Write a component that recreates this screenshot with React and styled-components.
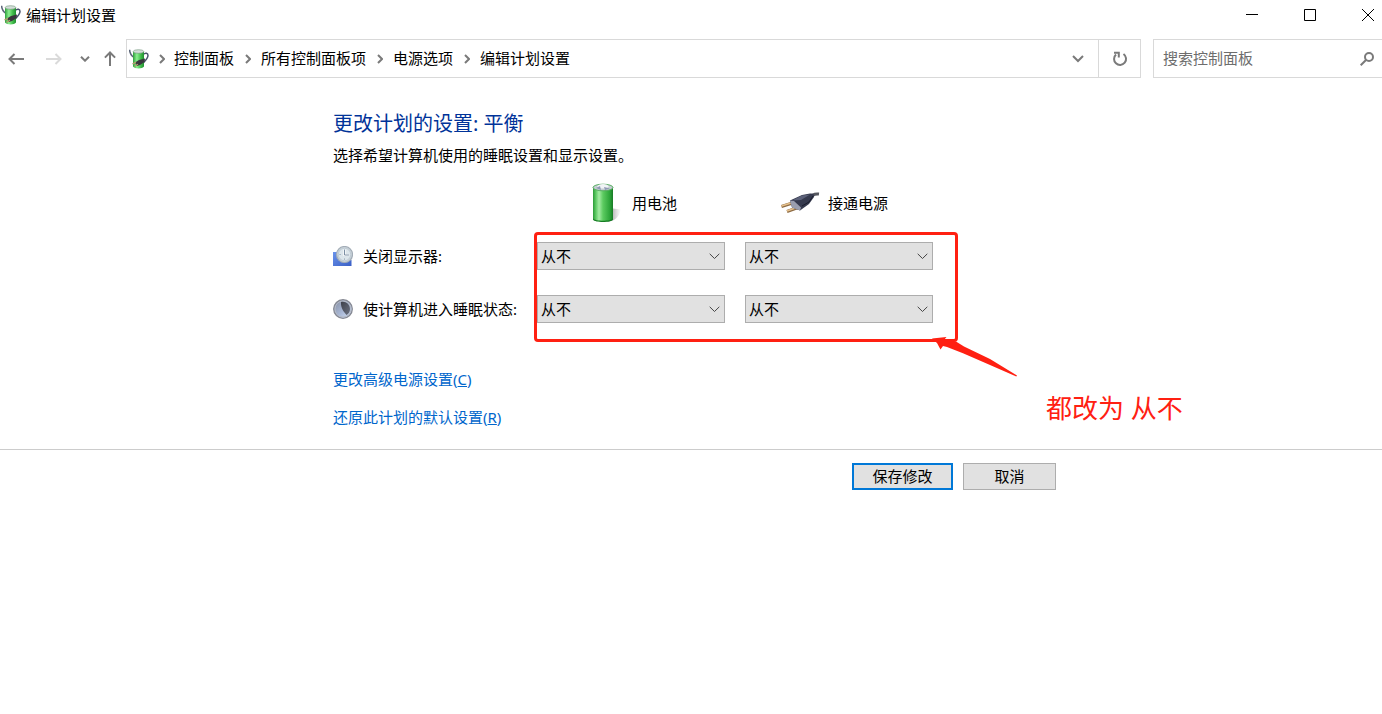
import React from "react";
import styled, { createGlobalStyle } from "styled-components";

const GlobalStyle = createGlobalStyle`
  * { box-sizing: border-box; }
  body {
    margin: 0;
    background: #fff;
    color: #000;
    font: 15px/20px "Noto Sans", "Noto Sans CJK SC", sans-serif;
  }
  button, input, select { font: inherit; color: inherit; }
`;

const Window = styled.div`
  min-height: 100vh;
  overflow: hidden;
`;

const TitleBar = styled.header`
  display: flex;
  align-items: center;
  justify-content: space-between;
  height: 30px;
`;

const WindowTitle = styled.div`
  display: flex;
  align-items: center;
  gap: 5px;
  padding-left: 1px;
`;

const WindowControls = styled.div`
  display: flex;
  gap: 30px;
`;

const IconButton = styled.button`
  display: flex;
  align-items: center;
  justify-content: center;
  flex: none;
  width: ${(p) => p.$width}px;
  height: 30px;
  padding: 0;
  border: 0;
  background: transparent;
`;

const NavBar = styled.nav`
  display: flex;
  align-items: center;
  margin-top: 9px;
`;

const NavButtons = styled.div`
  display: flex;
  align-items: center;
  width: 126px;
`;

const AddressBar = styled.div`
  display: flex;
  align-items: center;
  flex: 1;
  height: 39px;
  padding-left: 2px;
  border: 1px solid #d9d9d9;
`;

const Crumbs = styled.ol`
  display: flex;
  align-items: center;
  flex: 1;
  margin: 0;
  padding: 0;
  list-style: none;
`;

const Crumb = styled.li`
  display: flex;
  align-items: center;
`;

const CrumbChevron = styled.span`
  display: flex;
  justify-content: center;
  width: ${(p) => (p.$first ? 25 : 27)}px;
`;

const CrumbLink = styled.a`
  padding-bottom: 2px;
  color: #000;
  text-decoration: none;
  white-space: nowrap;
`;

const Refresh = styled.div`
  display: flex;
  align-items: center;
  align-self: stretch;
  border-left: 1px solid #d9d9d9;
`;

const Search = styled.div`
  display: flex;
  align-items: center;
  width: 229px;
  height: 39px;
  margin-left: 12px;
  padding-left: 9px;
  border: 1px solid #d9d9d9;
  border-right: 0;
`;

const SearchInput = styled.input`
  flex: 1;
  min-width: 0;
  padding: 0 0 2px;
  border: 0;
  outline: 0;
  background: transparent;
  &::placeholder { color: #6d6d6d; opacity: 1; }
`;

const Section = styled.div`
  padding-left: 7px;
`;

const Content = styled.div`
  max-width: 723px;
  margin: 0 auto;
`;

const Main = styled.main`
  padding: 33px 0 22px;
`;

const Heading = styled.h1`
  margin: 0 0 8px;
  color: #003399;
  font-size: 20px;
  font-weight: 400;
  line-height: 26px;
`;

const Intro = styled.p`
  margin: 0 0 18px;
`;

const Settings = styled.div`
  position: relative;
  margin-bottom: 46px;
`;

const SourceRow = styled.div`
  display: grid;
  grid-template-columns: 188px 188px;
  align-items: center;
  height: 40px;
  margin-left: 204px;
`;

const SourceHeader = styled.div`
  display: flex;
  align-items: center;
  gap: 8px;
  padding-left: 55px;
`;

const SettingRow = styled.div`
  display: grid;
  grid-template-columns: 204px auto;
  align-items: center;
  margin-top: ${(p) => (p.$first ? 19 : 25)}px;
`;

const RowLabel = styled.div`
  display: flex;
  align-items: center;
  gap: 10px;
  white-space: nowrap;
`;

const Choices = styled.div`
  display: flex;
  gap: 20px;
`;

const SelectWrap = styled.div`
  display: grid;
  align-items: center;
  width: 188px;
  > * { grid-area: 1 / 1; }
  > svg { justify-self: end; margin-right: 5px; pointer-events: none; }
`;

const Select = styled.select`
  appearance: none;
  width: 100%;
  height: 28px;
  padding: 0 24px 0 3px;
  border: 1px solid #adadad;
  border-radius: 0;
  background: #e1e1e1;
`;

const Highlight = styled.div`
  position: absolute;
  left: 201px;
  top: 49px;
  width: 424px;
  height: 110px;
  border: 3px solid #ff2012;
  border-radius: 4px;
  pointer-events: none;
`;

const Arrow = styled.svg`
  position: absolute;
  left: 599px;
  top: 154px;
  pointer-events: none;
`;

const Note = styled.div`
  position: absolute;
  left: 713px;
  top: 208px;
  color: #ff2012;
  font-size: 26px;
  line-height: 34px;
  white-space: nowrap;
`;

const Links = styled.div`
  display: flex;
  flex-direction: column;
  align-items: flex-start;
  gap: 18px;
`;

const TaskLink = styled.a`
  color: #0066cc;
  text-decoration: none;
`;

const Footer = styled.footer`
  padding-top: 13px;
  border-top: 1px solid #cccccc;
`;

const Actions = styled.div`
  display: flex;
  justify-content: flex-end;
  gap: 10px;
`;

const Button = styled.button`
  width: ${(p) => (p.$primary ? 101 : 93)}px;
  height: 27px;
  padding: 0 0 2px;
  border: ${(p) => (p.$primary ? "2px solid #0078d7" : "1px solid #adadad")};
  background: #e1e1e1;
`;

const PowerIcon = () => (
  <svg width="20" height="20" viewBox="0 0 20 20" fill="none" aria-hidden="true">
    <defs>
      <linearGradient id="pwr" x1="0" x2="1">
        <stop offset="0" stopColor="#2f9e3c" />
        <stop offset=".35" stopColor="#8bf08f" />
        <stop offset=".7" stopColor="#43bd4c" />
        <stop offset="1" stopColor="#1f8f30" />
      </linearGradient>
    </defs>
    <path d="M.6.8C.8 4 2 6.500 5 8.500" stroke="#5a6478" strokeWidth="1.500" />
    <path d="M14 5.500c2.500-2.200 5-1.500 5 1 0 3-2.500 5-5.500 8" stroke="#48536b" strokeWidth="1.500" />
    <path d="M4 2.500h11V17.500c-1.500 2.500-9.500 2.500-11 0z" fill="url(#pwr)" />
    <ellipse cx="9.500" cy="2.500" rx="5.300" ry="1.800" fill="#d3ddd8" stroke="#6c9275" strokeWidth=".6" />
    <path d="m6 13.500 4-2.500 6-1.500-.5 3.500-4.500 3-3 1z" fill="#39363d" />
    <path d="m3.500 14.800 3.500-1.500M5.500 17.300l3.500-2" stroke="#b79a6c" strokeWidth="1.300" />
  </svg>
);

const BatteryIcon = () => (
  <svg width="32" height="40" viewBox="0 0 32 40" aria-hidden="true">
    <defs>
      <linearGradient id="bat" x1="0" x2="1">
        <stop offset="0" stopColor="#2c9a38" />
        <stop offset=".12" stopColor="#55c45c" />
        <stop offset=".3" stopColor="#a4eca3" />
        <stop offset=".5" stopColor="#5ccb60" />
        <stop offset=".85" stopColor="#2ba338" />
        <stop offset="1" stopColor="#187a25" />
      </linearGradient>
      <linearGradient id="shade" x1="0" x2="1">
        <stop offset="0" stopColor="#666" stopOpacity=".8" />
        <stop offset="1" stopColor="#999" stopOpacity="0" />
      </linearGradient>
    </defs>
    <path d="M16 38.500c6 0 11-4 13-12l-8-1z" fill="url(#shade)" />
    <path d="M1 4h20v32c-2 3.500-18 3.500-20 0z" fill="url(#bat)" />
    <ellipse cx="11" cy="4.500" rx="10" ry="3.300" fill="#c3cdd0" stroke="#58ad62" />
    <ellipse cx="11" cy="3.300" rx="5.500" ry="2.300" fill="#f1f3f6" />
    <path d="m4 5 4-2 1 4zM12 4l6 1.500-5 1.500z" fill="#8f9ab4" />
    <path d="M1 35.500c2 3 18 3 20 0v1.200c-2 3-18 3-20 0z" fill="#157c22" />
  </svg>
);

const PlugIcon = () => (
  <svg width="40" height="24" viewBox="0 0 40 24" fill="none" aria-hidden="true">
    <path d="m1.500 15.500 11-3.500M7 20.500l11-4" stroke="#8c6a43" strokeWidth="3" />
    <path d="m1.500 15 11-3.500M7 20l11-4" stroke="#e5c08c" strokeWidth="1.800" />
    <path d="M30 7c2-4 5-4.500 9-4" stroke="#55575f" strokeWidth="3" />
    <path d="M10 9.500 22 4l8-1.500c3-.5 5 1 4 3.500l-5 7-9 6.500-8-3z" fill="#363a4e" />
    <path d="m10 9.500 4 .5 7 6.500-1 3-8-3z" fill="#9a9eae" />
    <path d="m12 9.500 10-5 8-1-9 5.500z" fill="#5c6179" />
    <path d="m22 15 7-4 4-6" stroke="#191c2b" />
  </svg>
);

const ClockIcon = () => (
  <svg width="20" height="20" viewBox="0 0 20 20" fill="none" aria-hidden="true">
    <defs>
      <linearGradient id="scr" x1="0" y1="0" x2="1" y2="1">
        <stop offset="0" stopColor="#6a93ea" />
        <stop offset="1" stopColor="#3a5fc6" />
      </linearGradient>
    </defs>
    <path d="M0 6h4l11 8h3.500v6H0z" fill="url(#scr)" />
    <circle cx="11.500" cy="8.500" r="8" fill="#c9d3da" stroke="#a3adb7" strokeWidth="1.200" />
    <circle cx="11.500" cy="8.500" r="6.200" fill="#dce6eb" stroke="#b4c0ca" strokeWidth=".6" />
    <path d="M11.500 3.500V9h4.500" stroke="#fff" strokeWidth="2.200" />
    <path d="M11.500 3.500V9h4.500" stroke="#7b8fa3" />
    <path d="M6.500 8.500h1.200M11.500 12.500v1.200" stroke="#93a4b3" />
  </svg>
);

const MoonIcon = () => (
  <svg width="20" height="20" viewBox="0 0 20 20" aria-hidden="true">
    <defs>
      <linearGradient id="moon" x1="0" y1="0" x2="1" y2="1">
        <stop offset="0" stopColor="#858d9f" />
        <stop offset=".55" stopColor="#a8b7d5" />
        <stop offset="1" stopColor="#d9e5f8" />
      </linearGradient>
      <linearGradient id="dark" x1="0" y1="0" x2="1" y2="1">
        <stop offset="0" stopColor="#3e414b" />
        <stop offset="1" stopColor="#6b7180" />
      </linearGradient>
    </defs>
    <circle cx="10" cy="10" r="9.300" fill="url(#moon)" stroke="#858892" strokeWidth="1.300" />
    <circle cx="10" cy="10" r="8" fill="none" stroke="#b4bac6" />
    <path d="M8 3c5-1 9 2.500 9 7 0 3-1.500 5-3.500 6C11 13 7.500 9 8 3z" fill="url(#dark)" />
  </svg>
);

const Line = ({ w, h, d, color = "#7a7a7a", sw = 2 }) => (
  <svg width={w} height={h} viewBox={`0 0 ${w} ${h}`} fill="none" stroke={color} strokeWidth={sw} aria-hidden="true">
    <path d={d} />
  </svg>
);

const crumbs = ["控制面板", "所有控制面板项", "电源选项", "编辑计划设置"];

const rows = [
  { id: "display", label: "关闭显示器:", Icon: ClockIcon },
  { id: "sleep", label: "使计算机进入睡眠状态:", Icon: MoonIcon },
];

const sources = [
  { name: "用电池", Icon: BatteryIcon },
  { name: "接通电源", Icon: PlugIcon },
];

function Dropdown({ label }) {
  return (
    <SelectWrap>
      <Select aria-label={label} defaultValue="never">
        <option value="never">从不</option>
      </Select>
      <Line w={11} h={7} d="M.7.8 5.500 5.500 10.300.8" color="#444" sw={1} />
    </SelectWrap>
  );
}

export default function App() {
  return (
    <Window>
      <GlobalStyle />
      <TitleBar>
        <WindowTitle>
          <PowerIcon />
          <span>编辑计划设置</span>
        </WindowTitle>
        <WindowControls>
          <IconButton $width={28} aria-label="最小化">
            <Line w={12} h={12} d="M0 5.500h12" color="#000" sw={1} />
          </IconButton>
          <IconButton $width={28} aria-label="最大化">
            <Line w={12} h={12} d="M.5.5h11v11H.5z" color="#000" sw={1} />
          </IconButton>
          <IconButton $width={28} aria-label="关闭">
            <Line w={12} h={12} d="m0 0 12 12M12 0 0 12" color="#000" sw={1} />
          </IconButton>
        </WindowControls>
      </TitleBar>

      <NavBar>
        <NavButtons>
          <IconButton $width={31} aria-label="后退">
            <Line w={16} h={12} d="M16 6H1.500M6.500 1l-5 5 5 5" />
          </IconButton>
          <IconButton $width={46} aria-label="前进">
            <Line w={16} h={12} d="M0 6h14.500M9.500 1l5 5-5 5" color="#dadada" />
          </IconButton>
          <IconButton $width={15} aria-label="最近的位置">
            <Line w={10} h={6} d="m1 .7 4 4 4-4" />
          </IconButton>
          <IconButton $width={35} aria-label="向上">
            <Line w={12} h={15} d="M6 15V1.500M.9 6.600 6 1.500l5.100 5.100" />
          </IconButton>
        </NavButtons>
        <AddressBar>
          <PowerIcon />
          <Crumbs>
            {crumbs.map((name, i) => (
              <Crumb key={name}>
                <CrumbChevron $first={i === 0}>
                  <Line w={6} h={10} d="m1 1 4 4-4 4" />
                </CrumbChevron>
                <CrumbLink href="#">{name}</CrumbLink>
              </Crumb>
            ))}
          </Crumbs>
          <IconButton $width={40} aria-label="以前的位置">
            <Line w={12} h={8} d="m1 1 5 5 5-5" />
          </IconButton>
          <Refresh>
            <IconButton $width={41} aria-label="刷新">
              <Line w={16} h={16} d="M11.500 3a6 6 0 1 1-7.500.5M2 1.800h4.800v4.700" />
            </IconButton>
          </Refresh>
        </AddressBar>
        <Search>
          <SearchInput type="text" placeholder="搜索控制面板" aria-label="搜索控制面板" />
          <IconButton $width={30} aria-label="搜索">
            <svg width="14" height="14" viewBox="0 0 14 14" fill="none" stroke="#7a7a7a" strokeWidth="2" aria-hidden="true">
              <circle cx="9" cy="5" r="4" />
              <path d="M6.200 7.800.7 13.300" />
            </svg>
          </IconButton>
        </Search>
      </NavBar>

      <Section>
        <Content>
          <Main>
            <Heading>更改计划的设置: 平衡</Heading>
            <Intro>选择希望计算机使用的睡眠设置和显示设置。</Intro>
            <Settings>
              <SourceRow>
                {sources.map(({ name, Icon }) => (
                  <SourceHeader key={name}>
                    <Icon />
                    {name}
                  </SourceHeader>
                ))}
              </SourceRow>
              {rows.map(({ id, label, Icon }, i) => (
                <SettingRow key={id} $first={i === 0}>
                  <RowLabel>
                    <Icon />
                    {label}
                  </RowLabel>
                  <Choices>
                    {sources.map(({ name }) => (
                      <Dropdown key={name} label={`${label} ${name}`} />
                    ))}
                  </Choices>
                </SettingRow>
              ))}
              <Highlight />
              <Arrow width="86" height="42" viewBox="0 0 86 42" aria-hidden="true">
                <path d="M0 1.500 14.500 0 12 3l12 1.500 8 5L58 22l27 16.500-.7 1L58 28 31 16.300 15 10l-4-1-2.500 3.500L5 6z" fill="#ff2012" />
              </Arrow>
              <Note>都改为 从不</Note>
            </Settings>
            <Links>
              <TaskLink href="#">更改高级电源设置(<u>C</u>)</TaskLink>
              <TaskLink href="#">还原此计划的默认设置(<u>R</u>)</TaskLink>
            </Links>
          </Main>
        </Content>
      </Section>

      <Footer>
        <Section>
          <Content>
            <Actions>
              <Button $primary>保存修改</Button>
              <Button>取消</Button>
            </Actions>
          </Content>
        </Section>
      </Footer>
    </Window>
  );
}
